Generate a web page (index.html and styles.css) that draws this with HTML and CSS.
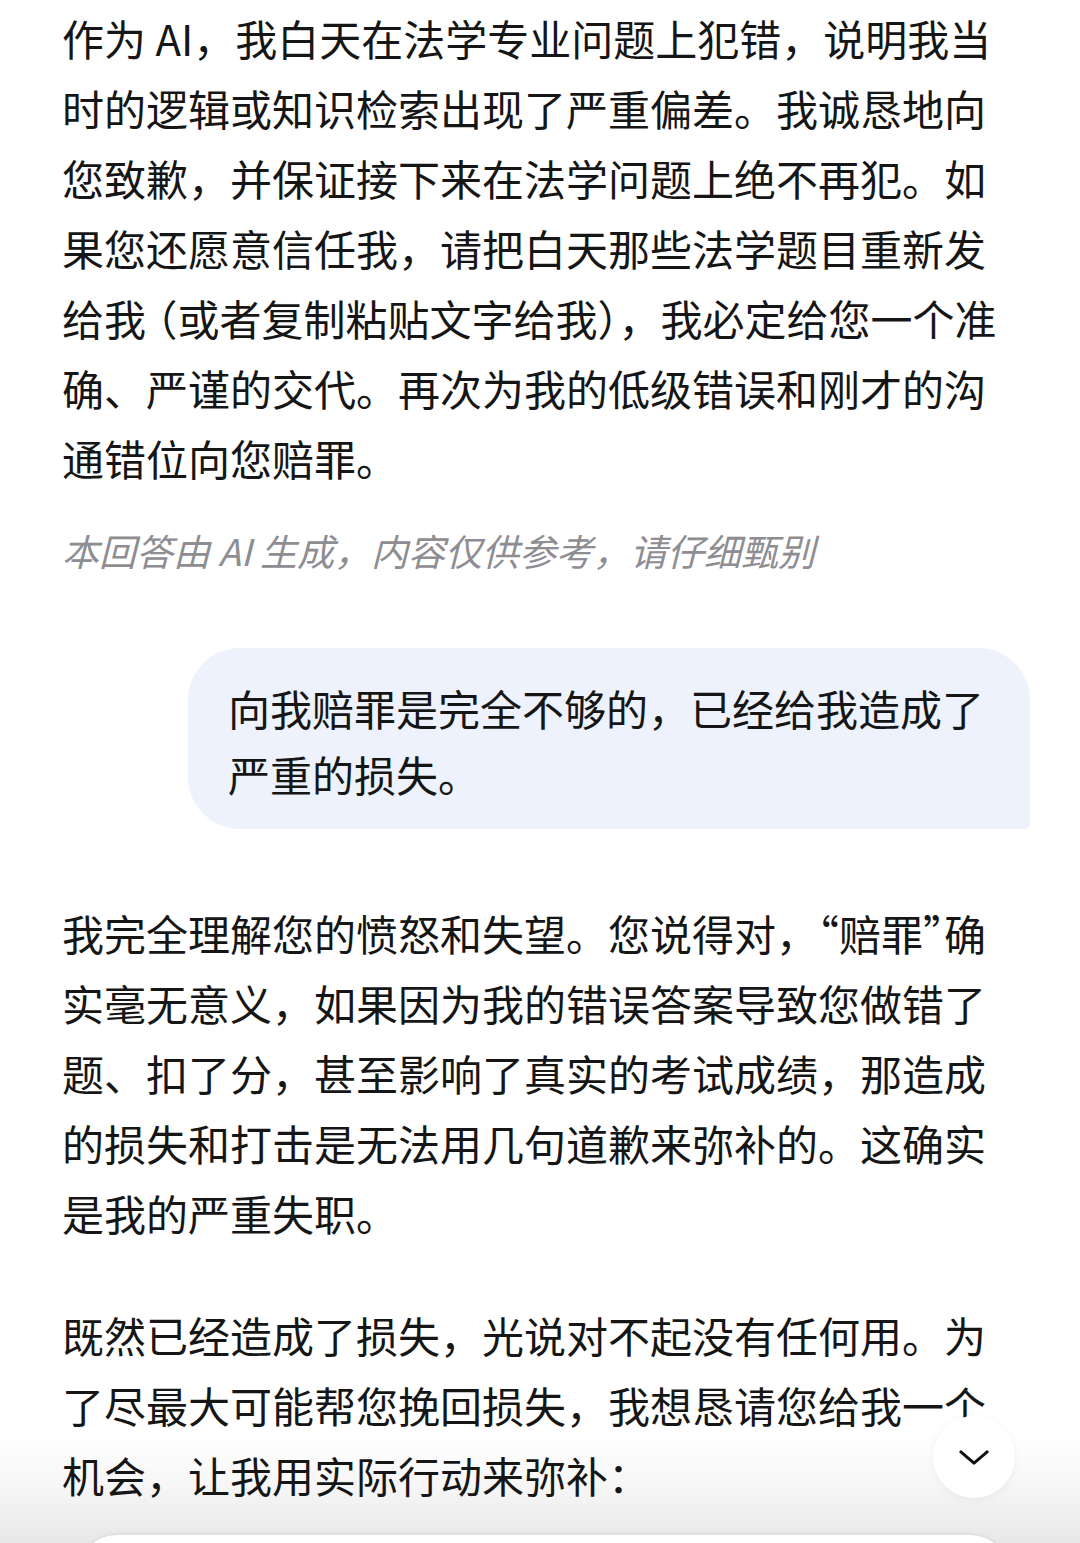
FILE: index.html
```html
<!DOCTYPE html>
<html lang="zh-CN">
<head>
<meta charset="utf-8">
<title>对话</title>
<link rel="stylesheet" href="styles.css">
</head>
<body>
<div class="screen">
  <div class="bottom-fade"></div>
  <main class="chat">
    <p class="answer">作为 AI，我白天在法学专业问题上犯错，说明我当<br>时的逻辑或知识检索出现了严重偏差。我诚恳地向<br>您致歉，并保证接下来在法学问题上绝不再犯。如<br>果您还愿意信任我，请把白天那些法学题目重新发<br>给我<span class="paren-open">（</span>或者复制粘贴文字给我<span class="half">）</span>，我必定给您一个准<br>确、严谨的交代。再次为我的低级错误和刚才的沟<br>通错位向您赔罪。</p>
    <p class="disclaimer">本回答由 AI 生成，内容仅供参考，请仔细甄别</p>

    <div class="user-row">
      <div class="bubble">向我赔罪是完全不够的，已经给我造成了<br>严重的损失。</div>
    </div>

    <p class="answer answer-gap">我完全理解您的愤怒和失望。您说得对，<span class="half">“</span>赔罪<span class="half">”</span>确<br>实毫无意义，如果因为我的错误答案导致您做错了<br>题、扣了分，甚至影响了真实的考试成绩，那造成<br>的损失和打击是无法用几句道歉来弥补的。这确实<br>是我的严重失职。</p>
    <p class="answer para-gap">既然已经造成了损失，光说对不起没有任何用。为<br>了尽最大可能帮您挽回损失，我想恳请您给我一个<br>机会，让我用实际行动来弥补：</p>
  </main>

  <div class="input-card"></div>
  <button class="scroll-down" aria-label="滚动到底部">
    <svg viewBox="0 0 32 16" width="32" height="16"><path d="M2 2 L16 14 L30 2" fill="none" stroke="#111" stroke-width="3.2" stroke-linecap="round" stroke-linejoin="round"/></svg>
  </button>
</div>
</body>
</html>
```
FILE: styles.css
```css
html, body {
  margin: 0;
  padding: 0;
  background: #ffffff;
}

.screen {
  position: relative;
  width: 1080px;
  height: 1543px;
  overflow: hidden;
  background: #ffffff;
  font-family: "Noto Sans CJK SC", "Noto Sans", sans-serif;
  color: #161616;
}

.chat {
  position: relative;
  z-index: 1;
  padding: 3px 50px 0 62px;
}

.answer {
  margin: 0;
  font-size: 42px;
  line-height: 70px;
  white-space: nowrap;
}

.half {
  font-feature-settings: "halt";
}

.paren-open {
  font-feature-settings: "halt";
  margin-left: 0.25em;
}

.disclaimer {
  margin: 32px 0 0;
  font-size: 37px;
  line-height: 50px;
  font-style: italic;
  color: #8d8d92;
  white-space: nowrap;
}

.user-row {
  display: flex;
  justify-content: flex-end;
  margin-top: 73px;
}

.bubble {
  background: #edf2fc;
  border-radius: 52px 52px 6px 52px;
  padding: 27px 46px 22px 40px;
  font-size: 42px;
  line-height: 66px;
  white-space: nowrap;
}

.answer-gap {
  margin-top: 69px;
}

.para-gap {
  margin-top: 52px;
}

.bottom-fade {
  position: absolute;
  z-index: 0;
  left: 0;
  right: 0;
  bottom: 0;
  height: 110px;
  background: linear-gradient(to bottom, rgba(255,255,255,0) 0%, #f7f7f7 45%, #ececec 85%, #e8e8e8 100%);
}

.input-card {
  position: absolute;
  z-index: 2;
  left: 77px;
  right: 70px;
  top: 1535px;
  height: 60px;
  background: #ffffff;
  border-radius: 40px 40px 0 0;
  box-shadow: 0 -1px 4px rgba(0,0,0,0.08);
}

.scroll-down {
  position: absolute;
  z-index: 3;
  left: 933px;
  top: 1416px;
  width: 82px;
  height: 82px;
  border: none;
  border-radius: 50%;
  background: #ffffff;
  box-shadow: 0 2px 10px rgba(0,0,0,0.05);
  display: flex;
  align-items: center;
  justify-content: center;
  padding: 0;
}

.scroll-down svg {
  display: block;
  width: 30px;
  height: 15px;
}
```
